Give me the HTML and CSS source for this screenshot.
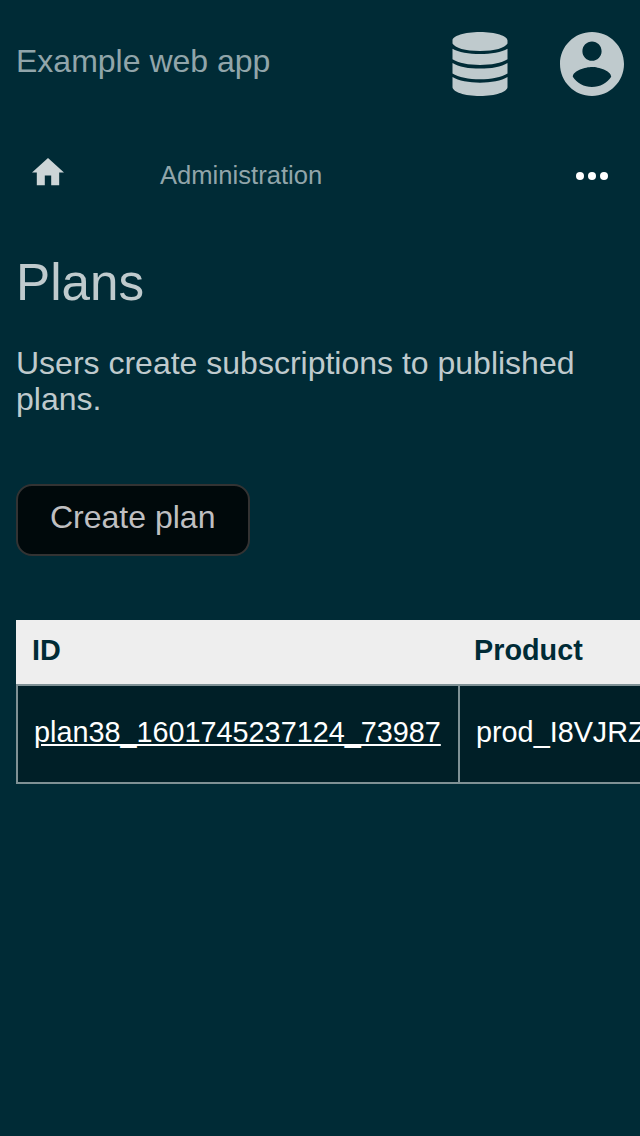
FILE: index.html
```html
<!DOCTYPE html>
<html lang="en">
<head>
<meta charset="utf-8">
<title>Plans</title>
<link rel="stylesheet" href="styles.css">
</head>
<body>
<header class="topbar">
  <span class="brand">Example web app</span>
  <a class="top-icon" href="#" aria-label="Data"><svg class="database" viewBox="0 0 56 64"><path d="M28 0C43.500 0 55.500 4 55.500 8.500V11.500C53 16 43 19 28 19S3 16 .5 11.500V8.500C.5 4 12.500 0 28 0zM.5 16.700C12 23.800 44 23.800 55.500 16.700V27.300C44 34.900 12 34.900 .5 27.300zM.5 30.900C12 38.500 44 38.500 55.500 30.900V41.500C44 49.200 12 49.200 .5 41.500zM.5 45C12 52.500 44 52.500 55.500 45V55C55.500 59.800 43.500 64 28 64S.5 59.800 .5 55z"/></svg></a>
  <a class="top-icon" href="#" aria-label="Account"><svg class="account" viewBox="2 2 20 20"><path d="M12 2C6.480 2 2 6.480 2 12s4.480 10 10 10 10-4.480 10-10S17.520 2 12 2zm0 3c1.660 0 3 1.340 3 3s-1.340 3-3 3-3-1.340-3-3 1.340-3 3-3zm0 14.200c-2.500 0-4.710-1.280-6-3.220.03-1.990 4-3.080 6-3.080 1.990 0 5.970 1.090 6 3.080-1.290 1.940-3.500 3.220-6 3.220z"/></svg></a>
</header>
<nav class="crumbs">
  <a class="home" href="#" aria-label="Home"><svg viewBox="2 3 20 17"><path d="M10 20v-6h4v6h5v-8h3L12 3 2 12h3v8z"/></svg></a>
  <span class="section">Administration</span>
  <span class="more"><i></i><i></i><i></i></span>
</nav>
<main class="content">
  <h1 class="title">Plans</h1>
  <p class="intro">Users create subscriptions to published plans.</p>
  <a class="button" href="#">Create plan</a>
  <div class="table-wrap">
    <table class="plans">
      <thead><tr><th class="id">ID</th><th>Product</th></tr></thead>
      <tbody><tr><td><a href="#">plan38_1601745237124_73987</a></td><td>prod_I8VJRZ</td></tr></tbody>
    </table>
  </div>
</main>
</body>
</html>
```
FILE: styles.css
```css
* { box-sizing: border-box; }
body {
  margin: 0;
  min-height: 1136px;
  background: #002b36;
  color: #bfcacd;
  font: 32px/36px "Liberation Sans", Arial, sans-serif;
}
svg { display: block; fill: currentColor; }
a { color: inherit; text-decoration: none; }

.topbar {
  display: flex;
  align-items: center;
  height: 128px;
  padding: 0 16px;
  gap: 48px;
}
.brand { flex: 1; padding-bottom: 6px; color: #91a5aa; }
.top-icon { display: flex; justify-content: center; width: 64px; }
.database { width: 56px; height: 64px; }
.account { width: 64px; height: 64px; }

.crumbs {
  display: flex;
  align-items: center;
  height: 96px;
  padding: 0 32px;
}
.home { width: 128px; padding-bottom: 8px; color: #ccd5d7; }
.home svg { width: 32px; height: 27.2px; }
.section { flex: 1; padding-bottom: 2px; font-size: 25.6px; color: #91a5aa; }
.more { display: flex; gap: 4px; }
.more i { width: 8px; height: 8px; border-radius: 50%; background: #fff; }

.content { padding: 30px 0 0 16px; }
.title { margin: 0; font-size: 51.2px; line-height: 58px; font-weight: 400; }
.intro { margin: 33px 16px 0 0; }
.button {
  display: block;
  width: 234px;
  height: 72px;
  margin-top: 67px;
  padding: 13px 0 0 32px;
  border: 2px solid #333;
  border-radius: 16px;
  background: #00090b;
  color: #bfbfc1;
}
.table-wrap { margin-top: 64px; overflow: hidden; }
.plans {
  width: 800px;
  table-layout: fixed;
  border-spacing: 0;
  font-size: 28.8px;
  line-height: 32px;
}
.id { width: 442px; }
th {
  height: 64px;
  padding: 0 16px 4px;
  background: #eee;
  color: #002b36;
  text-align: left;
}
td {
  height: 100px;
  padding: 0 0 4px 16px;
  border: solid #7f9195;
  border-width: 2px 0 2px 2px;
  background: #001f27;
  color: #fff;
}
td a { text-decoration: underline; }
```
